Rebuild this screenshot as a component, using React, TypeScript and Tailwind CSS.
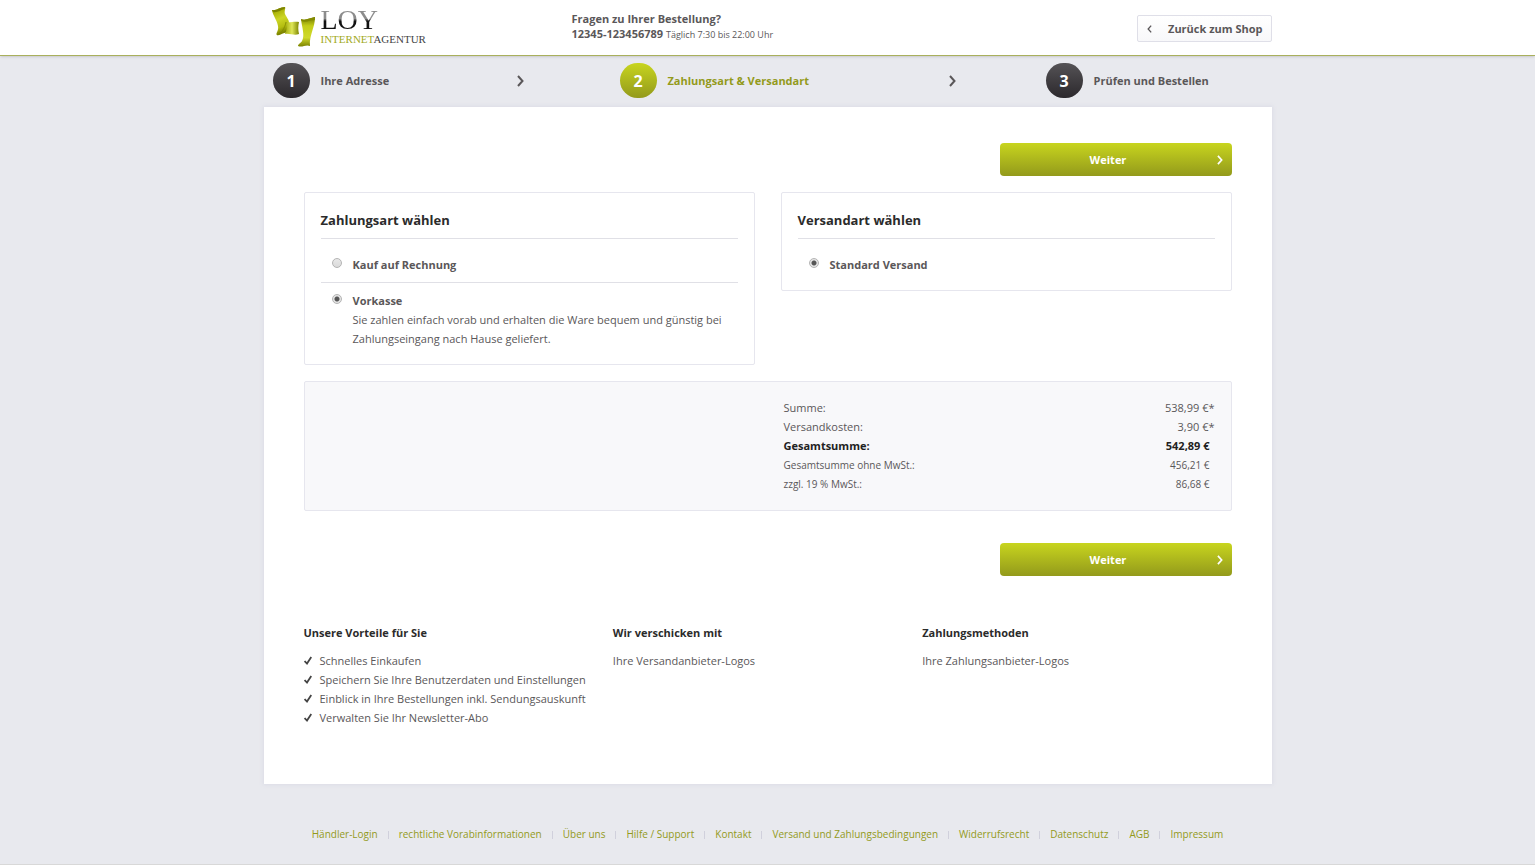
import React, { useState } from 'react';

const footerLinks = [
  'Händler-Login',
  'rechtliche Vorabinformationen',
  'Über uns',
  'Hilfe / Support',
  'Kontakt',
  'Versand und Zahlungsbedingungen',
  'Widerrufsrecht',
  'Datenschutz',
  'AGB',
  'Impressum',
];

const benefits = [
  'Schnelles Einkaufen',
  'Speichern Sie Ihre Benutzerdaten und Einstellungen',
  'Einblick in Ihre Bestellungen inkl. Sendungsauskunft',
  'Verwalten Sie Ihr Newsletter-Abo',
];

interface ChevronProps {
  className?: string;
  left?: boolean;
}

const Chevron: React.FC<ChevronProps> = ({ className, left }) => (
  <svg viewBox="0 0 7 12" className={className} fill="none" stroke="currentColor" strokeWidth="2" aria-hidden="true">
    <path d={left ? 'M6 1 L1.5 6 L6 11' : 'M1 1 L5.5 6 L1 11'} />
  </svg>
);

const Logo: React.FC = () => (
  <a href="#" className="flex gap-1.5 font-['Liberation_Serif',serif]">
    <svg viewBox="0 0 43 42" className="h-[42px] w-[43px]" aria-hidden="true">
      <defs>
        <linearGradient id="ribbonA" x1="0" y1="0" x2="0.25" y2="1">
          <stop offset="0" stopColor="#7f8600" />
          <stop offset="0.2" stopColor="#a9b206" />
          <stop offset="0.5" stopColor="#cdd626" />
          <stop offset="0.8" stopColor="#b4bd10" />
          <stop offset="1" stopColor="#7d8500" />
        </linearGradient>
        <linearGradient id="ribbonB" x1="0" y1="0" x2="1" y2="0">
          <stop offset="0" stopColor="#a3ac08" />
          <stop offset="0.5" stopColor="#dfe75a" />
          <stop offset="1" stopColor="#7d8500" />
        </linearGradient>
        <linearGradient id="ribbonC" x1="0" y1="0" x2="0" y2="1">
          <stop offset="0" stopColor="#727900" />
          <stop offset="0.3" stopColor="#c3cd18" />
          <stop offset="0.7" stopColor="#d0d92c" />
          <stop offset="1" stopColor="#7b8200" />
        </linearGradient>
      </defs>
      <path d="M0 4 C4 5 8 1 13 1 C14 2 12 5 13 8 C14 11 17 13 17 17 L17 27 C12 25 9 30 5 29 C3 28 7 25 6 20 C5 14 1 10 0 4 Z" fill="url(#ribbonA)" />
      <path d="M0 4 C4 5 8 1 13 1 L12.500 3 C9 4 5 7 1 6 Z" fill="#7c8300" />
      <path d="M14 16 C18 17 22 15 27 16 C26 20 26 24 27 28 C22 30 18 27 13 28 C15 24 15 20 14 16 Z" fill="url(#ribbonB)" />
      <path d="M5 29 C9 28 13 22 14 16" fill="none" stroke="#7f8600" strokeWidth="0.8" />
      <path d="M29 13 C33 15 38 12 43 11 C43 22 37 29 38 40 C34 38 30 42 26 40 C26 38 29 37 30 35 C33 29 30 22 29 13 Z" fill="url(#ribbonC)" />
      <path d="M29 13 C33 15 38 12 43 11 L43 14 C38 14 34 17 29.500 15 Z" fill="#838a00" />
    </svg>
    <span className="flex flex-col">
      <span className="bg-linear-to-b from-[#8c8c8c] from-45% to-[#111111] to-55% bg-clip-text text-[28px] leading-[28px] text-transparent">LOY</span>
      <span className="text-[11px] leading-[11px] text-[#444444]">
        <span className="text-[#a2aa1c]">INTERNET</span>AGENTUR
      </span>
    </span>
  </a>
);

interface StepProps {
  number: number;
  title: string;
  active?: boolean;
}

const Step: React.FC<StepProps> = ({ number, title, active }) => (
  <div className="flex items-center gap-[11px]">
    <span
      className={`flex h-[35px] w-[37px] items-center justify-center rounded-full bg-linear-to-b text-base font-bold text-white ${
        active ? 'from-[#c8d51e] to-[#939a1b]' : 'from-[#555356] to-[#2c292d]'
      }`}
    >
      {number}
    </span>
    <span className={`font-bold ${active ? 'text-[#939a1b]' : ''}`}>{title}</span>
  </div>
);

const NextButton: React.FC = () => (
  <button
    type="button"
    className="flex h-[33px] w-[232px] items-center rounded-sm bg-linear-to-b from-[#c8d51e] to-[#939a1b] pr-[9px] font-bold text-white"
  >
    <span className="flex-1">Weiter</span>
    <Chevron className="h-2.5 w-1.5" />
  </button>
);

interface OptionProps {
  name: string;
  label: string;
  checked: boolean;
  onSelect: () => void;
  children?: React.ReactNode;
}

const Option: React.FC<OptionProps> = ({ name, label, checked, onSelect, children }) => (
  <label className="flex gap-[11px] pl-[11px]">
    <input
      type="radio"
      name={name}
      checked={checked}
      onChange={onSelect}
      className="mt-[3px] h-2.5 w-2.5 shrink-0 appearance-none rounded-full border border-[#b4b4b4] bg-linear-to-b from-[#e8e8e8] to-[#dadada] checked:bg-[radial-gradient(circle,#555_0_2px,#e4e4e4_3px)]"
    />
    <span>
      <span className="block font-bold">{label}</span>
      {children}
    </span>
  </label>
);

const panel = 'rounded-xs border border-[#e6e6ee] px-4';
const panelTitle = 'border-b border-[#e0e0e6] text-[13px] font-bold text-[#2b2b2b]';

const App: React.FC = () => {
  const [payment, setPayment] = useState('vorkasse');
  const [shipping, setShipping] = useState('standard');

  return (
    <div className="min-h-screen bg-[#e8e9ee] font-['Open_Sans',sans-serif] text-[11px] leading-[19px] text-[#5a5759]">
      <header className="border-b border-[#a9b05c] bg-white shadow-sm">
        <div className="mx-auto flex h-[55px] max-w-[1008px] items-start justify-between pl-2">
          <div className="flex">
            <div className="w-[300px] pt-1.5">
              <Logo />
            </div>
            <div className="pt-[11px] leading-[15px]">
              <p className="font-bold">Fragen zu Ihrer Bestellung?</p>
              <p>
                <strong>12345-123456789</strong> <span className="text-[9px]">Täglich 7:30 bis 22:00 Uhr</span>
              </p>
            </div>
          </div>
          <button
            type="button"
            className="mt-[15px] flex h-[27px] w-[135px] items-center justify-between rounded-xs border border-[#dfdfe8] bg-linear-to-b from-white to-[#f8f8fa] px-2 font-bold"
          >
            <Chevron left className="ml-px h-2 w-[5px]" />
            Zurück zum Shop
          </button>
        </div>
      </header>

      <nav className="mx-auto grid h-[51px] max-w-[1008px] grid-cols-[347fr_426fr_226fr] items-center pb-0.5 pl-[9px]">
        <div className="flex items-center justify-between pr-24">
          <Step number={1} title="Ihre Adresse" />
          <Chevron className="h-3 w-[7px]" />
        </div>
        <div className="flex items-center justify-between pr-[90px]">
          <Step number={2} title="Zahlungsart & Versandart" active />
          <Chevron className="h-3 w-[7px]" />
        </div>
        <Step number={3} title="Prüfen und Bestellen" />
      </nav>

      <main className="mx-auto max-w-[1008px] bg-white px-10 pt-9 pb-[57px] shadow-[0_0_4px_1px_#dcdce6]">
        <div className="flex justify-end">
          <NextButton />
        </div>

        <div className="mt-4 grid grid-cols-2 items-start gap-[26px]">
          <section className={`${panel} pt-[18px] pb-4`}>
            <h2 className={`${panelTitle} pb-2`}>Zahlungsart wählen</h2>
            <div className="border-b border-[#e0e0e6] pt-4 pb-2">
              <Option name="payment" label="Kauf auf Rechnung" checked={payment === 'rechnung'} onSelect={() => setPayment('rechnung')} />
            </div>
            <div className="pt-2">
              <Option name="payment" label="Vorkasse" checked={payment === 'vorkasse'} onSelect={() => setPayment('vorkasse')}>
                Sie zahlen einfach vorab und erhalten die Ware bequem und günstig bei Zahlungseingang nach Hause geliefert.
              </Option>
            </div>
          </section>

          <section className={`${panel} pt-[18px] pb-4`}>
            <h2 className={`${panelTitle} pb-2`}>Versandart wählen</h2>
            <div className="pt-4">
              <Option name="shipping" label="Standard Versand" checked={shipping === 'standard'} onSelect={() => setShipping('standard')} />
            </div>
          </section>
        </div>

        <section className={`${panel} mt-4 flex justify-end bg-[#f8f8fa] py-4`}>
          <table className="w-[431px]">
            <tbody>
              <tr>
                <th scope="row" className="text-left font-normal">Summe:</th>
                <td className="text-right">538,99 €*</td>
              </tr>
              <tr>
                <th scope="row" className="text-left font-normal">Versandkosten:</th>
                <td className="text-right">3,90 €*</td>
              </tr>
              <tr className="font-bold text-[#222222]">
                <th scope="row" className="text-left">Gesamtsumme:</th>
                <td className="pr-[5px] text-right">542,89 €</td>
              </tr>
              <tr className="text-[10px]">
                <th scope="row" className="pt-px text-left font-normal">Gesamtsumme ohne MwSt.:</th>
                <td className="pt-px pr-[5px] text-right">456,21 €</td>
              </tr>
              <tr className="text-[10px]">
                <th scope="row" className="text-left font-normal">zzgl. 19 % MwSt.:</th>
                <td className="pr-[5px] text-right">86,68 €</td>
              </tr>
            </tbody>
          </table>
        </section>

        <div className="mt-8 flex justify-end">
          <NextButton />
        </div>

        <div className="mt-[47px] grid grid-cols-3">
          <section>
            <h3 className="mb-[9px] font-bold text-[#2b2b2b]">Unsere Vorteile für Sie</h3>
            <ul>
              {benefits.map((benefit) => (
                <li key={benefit} className="flex items-center gap-2">
                  <svg viewBox="0 0 8 9" className="h-[9px] w-2" fill="none" stroke="#444444" strokeWidth="1.8" aria-hidden="true">
                    <path d="M0.600 5 L3 7.500 L7.300 1" />
                  </svg>
                  {benefit}
                </li>
              ))}
            </ul>
          </section>
          <section>
            <h3 className="mb-[9px] font-bold text-[#2b2b2b]">Wir verschicken mit</h3>
            <p>Ihre Versandanbieter-Logos</p>
          </section>
          <section>
            <h3 className="mb-[9px] font-bold text-[#2b2b2b]">Zahlungsmethoden</h3>
            <p>Ihre Zahlungsanbieter-Logos</p>
          </section>
        </div>
      </main>

      <footer className="mx-auto max-w-[1008px] pt-[41px] text-center">
        <ul className="flex justify-center text-[10px] text-[#939a1b]">
          {footerLinks.map((link, index) => (
            <li key={link} className="flex items-center">
              {index > 0 && <span className="mx-2.5 h-2 w-px bg-[#d0d0dc]" />}
              <a href="#">{link}</a>
            </li>
          ))}
        </ul>
        <p className="mt-[15px] h-[5px] overflow-hidden text-[10px] text-[#a5a3ab]">
          * Alle Preise inkl. gesetzl. Mehrwertsteuer zzgl. Versandkosten und ggf. Nachnahmegebühren, wenn nicht anders beschrieben
        </p>
      </footer>
      <div className="h-0.5 border-t border-[#d8d8d8] bg-[#f0f0f0]" />
    </div>
  );
};

export default App;
